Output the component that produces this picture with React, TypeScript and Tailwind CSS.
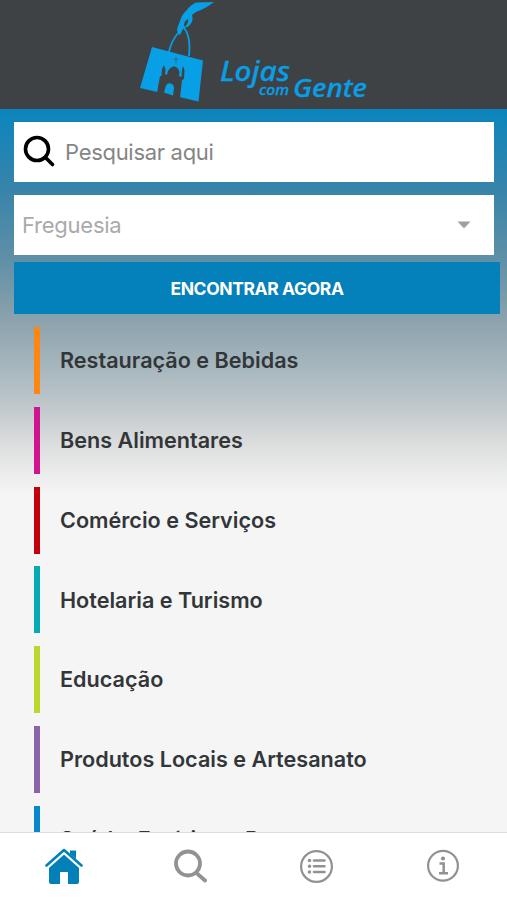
const CATEGORIES = [
  { name: "Restauração e Bebidas", bar: "bg-[#ff8610]" },
  { name: "Bens Alimentares", bar: "bg-[#d0148f]" },
  { name: "Comércio e Serviços", bar: "bg-[#c3000d]" },
  { name: "Hotelaria e Turismo", bar: "bg-[#06aab5]" },
  { name: "Educação", bar: "bg-[#b9d72c]" },
  { name: "Produtos Locais e Artesanato", bar: "bg-[#8b63a9]" },
  { name: "Saúde, Estética e Bem-estar", bar: "bg-[#0788cd]" },
];

function Logo() {
  return (
    <svg viewBox="0 0 250 108" className="w-[250px] h-[108px]" fill="#079fe5">
      {/* Hand */}
      <path d="M84 2L66 2.500Q60 5 57 10Q52 14 50 21L47 29Q47 33 50 35L53 29L59 26Q64 21 62 15L66 12Q75 9 84 2Z" />
      <path d="M54 25Q54 21 58 19Q59 22 55 27Z" fill="#3f4245" />
      {/* Bag handles */}
      <path d="M39 52Q41 41 49 32M54 28Q61 36 59 56" fill="none" stroke="#079fe5" strokeWidth="1.800" />
      <path d="M22 47L73 60.500L68.500 101.500L10 88Z" />
      {/* Church silhouette on the bag */}
      <path d="M27 93L30 76H31.500L32 69L34 65L35.500 70L35 74L37 75L38 71Q41 66 44.500 66.500Q48 67 49.500 72L49 76L51.500 77L52 70L53 66L54.500 70L54 79L52 80L50 98Z" fill="#3f4245" />
      <path d="M34 92.500L36 85.500Q38 82.500 41 83.500Q44 84.500 44 88L43 95.500Z" />
      <path d="M46 57V63M43.500 59.500H48.500" stroke="#2e6f96" strokeWidth="1.200" />
      <g fontFamily="Noto Sans, sans-serif" fontStyle="italic" fontWeight="500" stroke="#079fe5" strokeWidth="0.300">
        <text x="90" y="80.500" fontSize="27" textLength="70" lengthAdjust="spacingAndGlyphs">Lojas</text>
        <text x="129" y="94.500" fontSize="15" textLength="30" lengthAdjust="spacingAndGlyphs">com</text>
        <text x="163" y="96.500" fontSize="26" textLength="74" lengthAdjust="spacingAndGlyphs">Gente</text>
      </g>
    </svg>
  );
}

function TabBar() {
  return (
    <nav className="grid grid-cols-4 h-[68px] shrink-0 bg-white border-t border-[#dedede] text-[#929292]">
      <button className="flex justify-center pt-[15px] pl-0.5">
        <svg viewBox="0 0 38 36" className="w-[38px] h-9" fill="#0480b9">
          <path d="M25 2.500H31V12L25 7Z" />
          <path d="M19 4.500L34 18V34Q34 36 32 36H23V24H15V36H6Q4 36 4 34V18Z" />
          <path d="M1 19.500L19 3.500L37 19.500" fill="none" stroke="#fff" strokeWidth="4.600" />
          <path d="M1.500 17.500L19 2L36.500 17.500" fill="none" stroke="#0480b9" strokeWidth="2.600" strokeLinecap="round" strokeLinejoin="round" />
        </svg>
      </button>
      <button className="flex justify-center pt-4">
        <svg viewBox="0 0 34 34" className="w-[34px] h-[34px]" fill="none" stroke="currentColor" strokeWidth="3.800" strokeLinecap="round">
          <circle cx="15" cy="14.500" r="12" />
          <path d="M23.500 24L32 31.500" />
        </svg>
      </button>
      <button className="flex justify-center pt-4">
        <svg viewBox="0 0 34 34" className="w-[34px] h-[34px]" fill="none" stroke="currentColor" strokeWidth="2.200">
          <circle cx="16.500" cy="17.500" r="15.400" />
          <path d="M14 11.500H24.500M14 17.300H24.500M14 23H24.500" strokeWidth="2.600" strokeLinecap="round" />
          <path d="M9.500 11.500h.01M9.500 17.300h.01M9.500 23h.01" strokeWidth="3.600" strokeLinecap="round" />
        </svg>
      </button>
      <button className="flex justify-center pt-4">
        <svg viewBox="0 0 34 34" className="w-[34px] h-[34px]" fill="none" stroke="currentColor" strokeWidth="2.200">
          <circle cx="16" cy="16.800" r="14.900" />
          <circle cx="16" cy="9.500" r="2.100" fill="currentColor" stroke="none" />
          <path d="M12.500 14.500H16.700V24M12 24.300H21" strokeWidth="2.500" />
        </svg>
      </button>
    </nav>
  );
}

export default function App() {
  return (
    <div className="flex flex-col w-[507px] h-[900px] overflow-hidden bg-[#f5f5f5] font-['Inter',sans-serif]">
      <header className="h-[109px] shrink-0 bg-[#3f4245] pl-[130px]">
        <Logo />
      </header>

      <main className="flex-1 min-h-0 overflow-hidden pt-[13px] bg-[linear-gradient(180deg,#0a85bd_0px,#3784aa_80px,#608fa6_150px,#8ca3ad_212px,#bac4c9_290px,#dcdddd_335px,#f5f5f5_384px)]">
        <label className="flex items-center ml-[14px] w-[480px] h-[60px] bg-white pl-[9px]">
          <svg viewBox="0 0 34 34" className="w-[34px] h-[34px]" fill="none" stroke="#000" strokeWidth="3.600" strokeLinecap="round">
            <circle cx="14" cy="14" r="11.500" />
            <path d="M22.500 22.500L29.500 29.500" />
          </svg>
          <input placeholder="Pesquisar aqui" className="ml-2 w-80 text-[22px] tracking-[-0.3px] outline-none placeholder:text-[#858585]" />
        </label>

        <div className="flex items-center justify-between mt-[13px] ml-[14px] w-[480px] h-[60px] bg-white pl-2 pr-[23px]">
          <span className="text-[22px] tracking-[-0.25px] text-[#aaaaaa]">Freguesia</span>
          <svg viewBox="0 0 14 8" className="w-[14px] h-2" fill="#a0a0a0">
            <path d="M.5 .5H13.500L7 7.500Z" />
          </svg>
        </div>

        <button className="block mt-[7px] ml-[14px] w-[486px] h-[52px] pt-0.5 bg-[#0480ba] text-white text-[17.5px] tracking-[-0.4px] font-bold">
          ENCONTRAR AGORA
        </button>

        <ul className="mt-[13px] ml-[34px] flex flex-col gap-[12.800px]">
          {CATEGORIES.map(c => (
            <li key={c.name} className="flex items-center h-[67px] shrink-0">
              <span className={`w-[6px] h-full ${c.bar}`} />
              <span className="ml-5 text-[21.6px] font-semibold text-[#333639]">{c.name}</span>
            </li>
          ))}
        </ul>
      </main>

      <TabBar />
    </div>
  );
}
